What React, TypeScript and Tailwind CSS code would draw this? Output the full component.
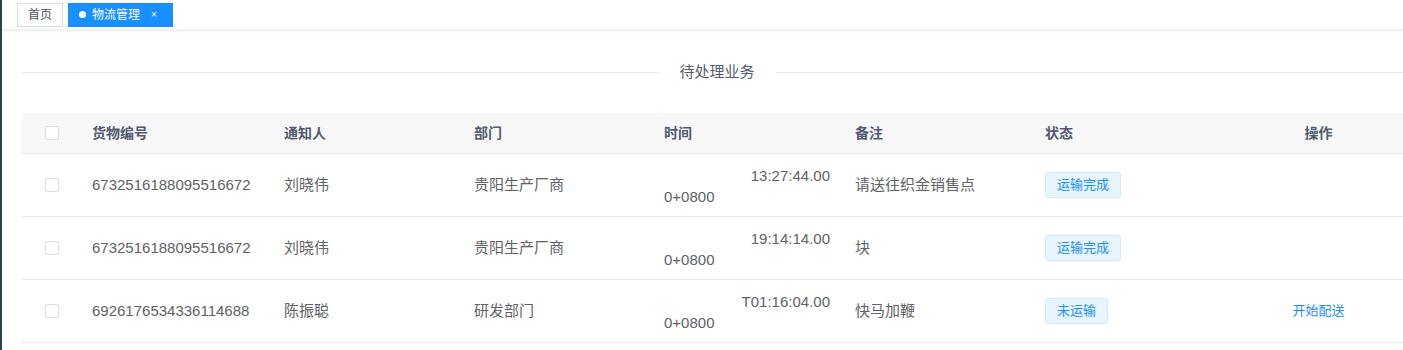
const rows = [
  { id: '6732516188095516672', who: '刘晓伟', dept: '贵阳生产厂商', time: '13:27:44.00', note: '请送往织金销售点', status: '运输完成', action: '' },
  { id: '6732516188095516672', who: '刘晓伟', dept: '贵阳生产厂商', time: '19:14:14.00', note: '块', status: '运输完成', action: '' },
  { id: '6926176534336114688', who: '陈振聪', dept: '研发部门', time: 'T01:16:04.00', note: '快马加鞭', status: '未运输', action: '开始配送' },
];

const heads = ['货物编号', '通知人', '部门', '时间', '备注', '状态'];

function Box() {
  return <span className="block w-[14px] h-[14px] rounded-[2px] border border-[#dcdee2] bg-white" />;
}

export default function App() {
  const grid = 'grid grid-cols-[60px_192px_190px_190px_191px_190px_190px_1fr]';
  return (
    <div
      className="flex h-[350px] overflow-hidden bg-white text-[#606266]"
      style={{ fontFamily: '"Liberation Sans", "Noto Sans CJK SC", sans-serif' }}
    >
      <div className="w-[2px] shrink-0 bg-[#304156]" />
      <div className="flex-1 min-w-0">
        {/* Tags view */}
        <div className="h-[30px] flex items-center gap-[5px] pl-[15px] border-b border-[#eceef2] shadow-[0_1px_3px_rgba(0,0,0,0.08)]">
          <span className="h-[24px] px-[10px] flex items-center border border-[#d8dce5] text-[12px] text-[#495060] bg-white">首页</span>
          <span className="h-[24px] pl-[10px] pr-[15px] flex items-center gap-[6px] bg-[#1890ff] border border-[#1890ff] text-[12px] text-white">
            <span className="w-[7px] h-[7px] rounded-full bg-white" />
            物流管理
            <span className="ml-[5px] text-[10px] leading-none">×</span>
          </span>
        </div>

        <div className="pl-[20px] pt-[32px] w-[1410px]">
          {/* Divider */}
          <div className="flex items-center h-[20px]">
            <div className="flex-1 h-px bg-[#e8eaec]" />
            <span className="px-[21px] text-[15px] text-[#515a6e]">待处理业务</span>
            <div className="flex-1 h-px bg-[#e8eaec]" />
          </div>

          {/* Table */}
          <div className="mt-[31px] w-[1390px]">
            <div className={`${grid} h-[41px] items-center bg-[#f8f8f9] border-b border-[#e8eaec] text-[14px] font-bold text-[#515a6e]`}>
              <div className="flex justify-center"><Box /></div>
              {heads.map(h => (
                <div key={h} className="pl-[10px]">{h}</div>
              ))}
              <div className="text-center">操作</div>
            </div>
            {rows.map((r, i) => (
              <div key={i} className={`${grid} h-[63px] items-center border-b border-[#e8eaec] text-[15px]`}>
                <div className="flex justify-center"><Box /></div>
                <div className="pl-[10px]">{r.id}</div>
                <div className="pl-[10px]">{r.who}</div>
                <div className="pl-[10px]">{r.dept}</div>
                <div className="pl-[10px] pr-[15px] leading-[21px] pt-[2px]">
                  <div className="text-right">{r.time}</div>
                  <div>0+0800</div>
                </div>
                <div className="pl-[10px]">{r.note}</div>
                <div className="pl-[10px]">
                  <span className="inline-flex items-center h-[26px] px-[11px] rounded-[3px] bg-[#e8f4ff] border border-[#d1e9ff] text-[13px] text-[#1890ff]">
                    {r.status}
                  </span>
                </div>
                <div className="text-center text-[13px] text-[#1890ff]">{r.action}</div>
              </div>
            ))}
          </div>
        </div>
      </div>
    </div>
  );
}
